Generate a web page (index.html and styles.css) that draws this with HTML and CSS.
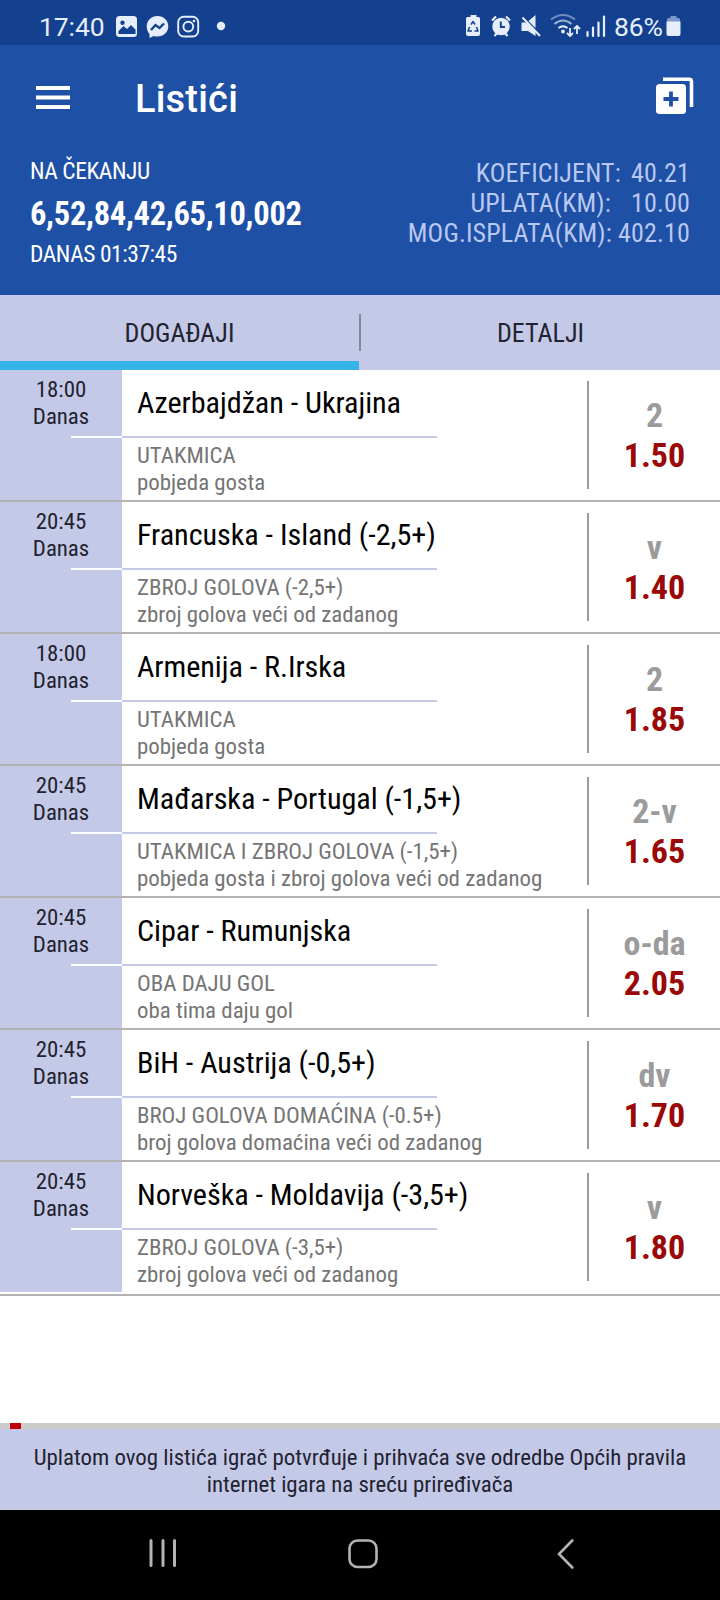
FILE: index.html
```html
<!DOCTYPE html>
<html lang="hr">
<head>
<meta charset="utf-8">
<title>Listići</title>
<link rel="stylesheet" href="styles.css">
</head>
<body>
<div class="screen">
  <div class="status">
    <span class="clock">17:40</span>
    <svg class="status-left" width="112" height="26" viewBox="0 0 112 26">
      <rect x="1" y="3" width="21" height="21" rx="3.5" fill="#e6eefc"/>
      <circle cx="7.5" cy="9.700" r="2.200" fill="#14418f"/>
      <path d="M3.500 21v-3l5-5 3.500 3 4-4 4.500 4.500V21z" fill="#14418f"/>
      <path d="M42.500 3c-6.200 0-10.800 4.400-10.800 10.300 0 3.200 1.100 5.600 2.600 7.300l.4 4.300 3.800-1.800c1.300.4 2.600.5 4 .5 6.200 0 10.800-4.400 10.800-10.300S48.700 3 42.500 3z" fill="#e6eefc"/>
      <path d="M36 17l4.500-5 4 3 4.500-4.500" fill="none" stroke="#14418f" stroke-width="2.400"/>
      <rect x="63.200" y="3.700" width="20" height="19.800" rx="5.500" fill="none" stroke="#e6eefc" stroke-width="1.900"/>
      <circle cx="73.300" cy="13.600" r="4.900" fill="none" stroke="#e6eefc" stroke-width="1.900"/>
      <circle cx="79" cy="8" r="1.300" fill="#e6eefc"/>
      <circle cx="106" cy="13" r="4.200" fill="#e6eefc"/>
    </svg>
    <svg class="status-right" width="142" height="26" viewBox="0 0 142 26">
      <g fill="#e6eefc">
        <path d="M5.500 2h6v2h2q1.500 0 1.500 1.500V21q0 2-2 2H3q-2 0-2-2V5.500Q1 4 2.500 4h3z"/>
        <circle cx="36" cy="13.500" r="8.700"/>
        <path d="M40 14h-4.200v-5.500" fill="none" stroke="#14418f" stroke-width="1.900"/>
        <path d="M27 7.500l4-4M45 7.500l-4-4M29.500 23l2.500-3M42.500 23l-2.500-3" fill="none" stroke="#e6eefc" stroke-width="2.200"/>
        <path d="M56.500 9.500h4l5 3 5 5.500v5L63 18h-6.500zM63.500 8l7-6v13z"/>
        <path d="M57.500 4.500L75 23" stroke="#e6eefc" stroke-width="2"/>
      </g>
      <path d="M6 11.500L8 8.500l2 3M11.500 14l1.500 4h-3.500M7 18H3l1.500-4" fill="none" stroke="#14418f" stroke-width="1.500" stroke-linejoin="round"/>
      <g fill="none" stroke="#e6eefc" stroke-width="2">
        <path d="M86 6.500q12-9 24 0" opacity=".45"/>
        <path d="M89.500 11q8.500-7 17 0" opacity=".65"/>
        <path d="M93.500 15q4.500-3.500 9 0"/>
      </g>
      <circle cx="98" cy="18.500" r="1.900" fill="#e6eefc"/>
      <path d="M105 15v8M102 20l3 3 3-3M112 21v-8M109 16l3-3 3 3" fill="none" stroke="#e6eefc" stroke-width="1.800"/>
      <path d="M122.500 19v4M128 14.500v8.500M133.500 9.500V23M139 3.500V23" fill="none" stroke="#e6eefc" stroke-width="2.200" stroke-linecap="round"/>
    </svg>
    <span class="percent">86%</span>
    <svg class="battery" width="15" height="22" viewBox="0 0 15 22">
      <path d="M4.500 1h6v2h2q1.500 0 1.500 1.500V7H1V4.500Q1 3 2.500 3h2z" fill="#7c97cb"/>
      <path d="M0.500 6.500h14V19q0 2-2 2h-10q-2 0-2-2z" fill="#e6eefc"/>
    </svg>
  </div>

  <header class="bar">
    <svg class="menu" width="34" height="23" viewBox="0 0 34 23" fill="#fff"><rect width="34" height="4"/><rect y="9.500" width="34" height="4"/><rect y="19" width="34" height="4"/></svg>
    <h1 class="title">Listići</h1>
    <svg class="add" width="38" height="38" viewBox="0 0 38 38">
      <path d="M7 3.300h26q2.500 0 2.500 2.500V31" fill="none" stroke="#fff" stroke-width="3.600"/>
      <rect x="0" y="8" width="30" height="30" rx="3.500" fill="#fff"/>
      <path d="M15 15.500v15M7.500 23h15" stroke="#1e50a5" stroke-width="3.800"/>
    </svg>
  </header>

  <section class="summary">
    <div class="ticket">
      <div class="state">NA ČEKANJU</div>
      <div class="number">6,52,84,42,65,10,002</div>
      <div class="when">DANAS 01:37:45</div>
    </div>
    <div class="totals">
      <div>KOEFICIJENT: <span class="coef">40.21</span></div>
      <div>UPLATA(KM): <span class="wide">10.00</span></div>
      <div>MOG.ISPLATA(KM): <span>402.10</span></div>
    </div>
  </section>

  <nav class="tabs">
    <div class="tab active">DOGAĐAJI</div>
    <div class="divider"></div>
    <div class="tab">DETALJI</div>
  </nav>

  <main class="events">
    <article class="event">
      <div class="time">18:00<br>Danas<i class="tick"></i></div>
      <div class="info"><h2>Azerbajdžan - Ukrajina</h2><p>UTAKMICA<br>pobjeda gosta</p></div>
      <div class="odds"><b class="pick">2</b><b class="odd">1.50</b></div>
    </article>
    <article class="event">
      <div class="time">20:45<br>Danas<i class="tick"></i></div>
      <div class="info"><h2>Francuska - Island (-2,5+)</h2><p>ZBROJ GOLOVA (-2,5+)<br>zbroj golova veći od zadanog</p></div>
      <div class="odds"><b class="pick">v</b><b class="odd">1.40</b></div>
    </article>
    <article class="event">
      <div class="time">18:00<br>Danas<i class="tick"></i></div>
      <div class="info"><h2>Armenija - R.Irska</h2><p>UTAKMICA<br>pobjeda gosta</p></div>
      <div class="odds"><b class="pick">2</b><b class="odd">1.85</b></div>
    </article>
    <article class="event">
      <div class="time">20:45<br>Danas<i class="tick"></i></div>
      <div class="info"><h2>Mađarska - Portugal (-1,5+)</h2><p>UTAKMICA I ZBROJ GOLOVA (-1,5+)<br>pobjeda gosta i zbroj golova veći od zadanog</p></div>
      <div class="odds"><b class="pick">2-v</b><b class="odd">1.65</b></div>
    </article>
    <article class="event">
      <div class="time">20:45<br>Danas<i class="tick"></i></div>
      <div class="info"><h2>Cipar - Rumunjska</h2><p>OBA DAJU GOL<br>oba tima daju gol</p></div>
      <div class="odds"><b class="pick">o-da</b><b class="odd">2.05</b></div>
    </article>
    <article class="event">
      <div class="time">20:45<br>Danas<i class="tick"></i></div>
      <div class="info"><h2>BiH - Austrija (-0,5+)</h2><p>BROJ GOLOVA DOMAĆINA (-0.5+)<br>broj golova domaćina veći od zadanog</p></div>
      <div class="odds"><b class="pick">dv</b><b class="odd">1.70</b></div>
    </article>
    <article class="event">
      <div class="time">20:45<br>Danas<i class="tick"></i></div>
      <div class="info"><h2>Norveška - Moldavija (-3,5+)</h2><p>ZBROJ GOLOVA (-3,5+)<br>zbroj golova veći od zadanog</p></div>
      <div class="odds"><b class="pick">v</b><b class="odd">1.80</b></div>
    </article>
  </main>

  <div class="progress"><div class="mark"></div></div>
  <footer class="notice">Uplatom ovog listića igrač potvrđuje i prihvaća sve odredbe Općih pravila<br>internet igara na sreću priređivača</footer>

  <div class="navbar">
    <svg class="recents" width="28" height="28" viewBox="0 0 28 28" stroke="#b4b4b4" stroke-width="3" stroke-linecap="round"><path d="M2 1.500v25M14 1.500v25M25.500 1.500v25"/></svg>
    <svg class="home" width="30" height="30" viewBox="0 0 30 30"><rect x="1.500" y="1.500" width="27" height="26.500" rx="8" fill="none" stroke="#b4b4b4" stroke-width="2.600"/></svg>
    <svg class="back" width="17" height="30" viewBox="0 0 17 30"><path d="M15.300 1.500L2 15l13.300 13.500" fill="none" stroke="#b4b4b4" stroke-width="2.600" stroke-linecap="round"/></svg>
  </div>
</div>
</body>
</html>
```

FILE: styles.css
```css
* { box-sizing: border-box; }
body { margin: 0; background: #fff; }
.screen {
  width: 720px; height: 1600px; display: flex; flex-direction: column; overflow: hidden;
  font-family: "Roboto Condensed", Roboto, sans-serif; background: #fff;
}
svg { display: block; flex: none; }

.status {
  height: 45px; flex: none; display: flex; align-items: flex-start; padding: 13px 0 0 39px;
  background: #14418f; color: #e6eefc; font: 26.5px/28px Roboto, sans-serif;
}
.clock { width: 76px; letter-spacing: -.1px; }
.status-left { width: 112px; }
.status-right { margin-left: 238px; }
.percent { width: 49px; margin-left: 7px; letter-spacing: -.2px; }
.battery { margin: 2px 0 0 3px; }

.bar { height: 105px; flex: none; display: flex; align-items: flex-start; background: #1e50a5; padding: 32px 26px 0 36px; }
.menu { margin-top: 9px; }
.title { margin: 0 auto 0 65px; color: #fff; font: 500 38px/44px Roboto, sans-serif; letter-spacing: .2px; }
.add { margin-top: -1px; }

.summary { height: 145px; flex: none; display: flex; justify-content: space-between; padding: 7px 30px 0; background: #1e50a5; color: #fff; }
.state, .when { font-size: 23.500px; line-height: 28px; letter-spacing: -.45px; }
.number { font-size: 32.500px; font-weight: 700; line-height: 40px; margin: 9px 0 6px; letter-spacing: -.3px; }
.totals { padding-top: 1px; text-align: right; font-size: 26px; line-height: 30px; letter-spacing: .15px; color: #b9c8f2; }
.totals .coef { margin-left: 4px; }
.totals .wide { margin-left: 14px; }

.tabs { height: 75px; flex: none; display: flex; background: #c5c9e8; color: #212330; font-size: 26px; line-height: 77px; text-align: center; }
.tab { flex: 1; }
.active { border-bottom: 9px solid #36b4e5; }
.divider { width: 2px; height: 37px; margin-top: 19px; background: #85879b; }

.events { flex: 1; }
.event { height: 132px; display: flex; align-items: stretch; border-bottom: 2px solid #b3b3b3; }
.event:last-child { height: 134px; padding-bottom: 2px; }
.time { width: 122px; background: #c5c9e8; color: #212330; font-size: 22.900px; line-height: 27px; text-align: center; padding-top: 6px; letter-spacing: -.05px; }
.tick { display: block; width: 51px; height: 2px; margin: 6px 0 0 71px; background: #fff; }
.info { flex: 1; }
.info h2 { margin: 0; width: 315px; height: 68px; padding: 0 0 0 15px; border-bottom: 2px solid #c5c9e8; font-size: 30.200px; font-weight: 400; line-height: 65px; letter-spacing: -.05px; color: #000; white-space: nowrap; }
.info p { margin: 4px 0 0 15px; font-size: 22.900px; line-height: 27px; letter-spacing: -.02px; color: #757575; white-space: nowrap; }
.odds { width: 133px; height: 108px; margin-top: 11px; padding-top: 14px; border-left: 2px solid #9c9c9c; display: flex; flex-direction: column; align-items: center; font-size: 34px; line-height: 40px; }
.pick { color: #9b9b9b; }
.odd { color: #9a0808; }

.progress { height: 6px; flex: none; background: #ccc; padding-left: 10px; }
.mark { width: 11px; height: 6px; background: #c00008; }
.notice { height: 81px; flex: none; padding-top: 15px; background: #c5c9e8; color: #212330; text-align: center; font-size: 22.900px; line-height: 27px; letter-spacing: -.03px; }
.navbar { height: 90px; flex: none; display: flex; align-items: flex-start; padding: 29px 0 0 149px; background: #000; }
.home { margin-left: 171px; }
.back { margin-left: 179px; }
```
